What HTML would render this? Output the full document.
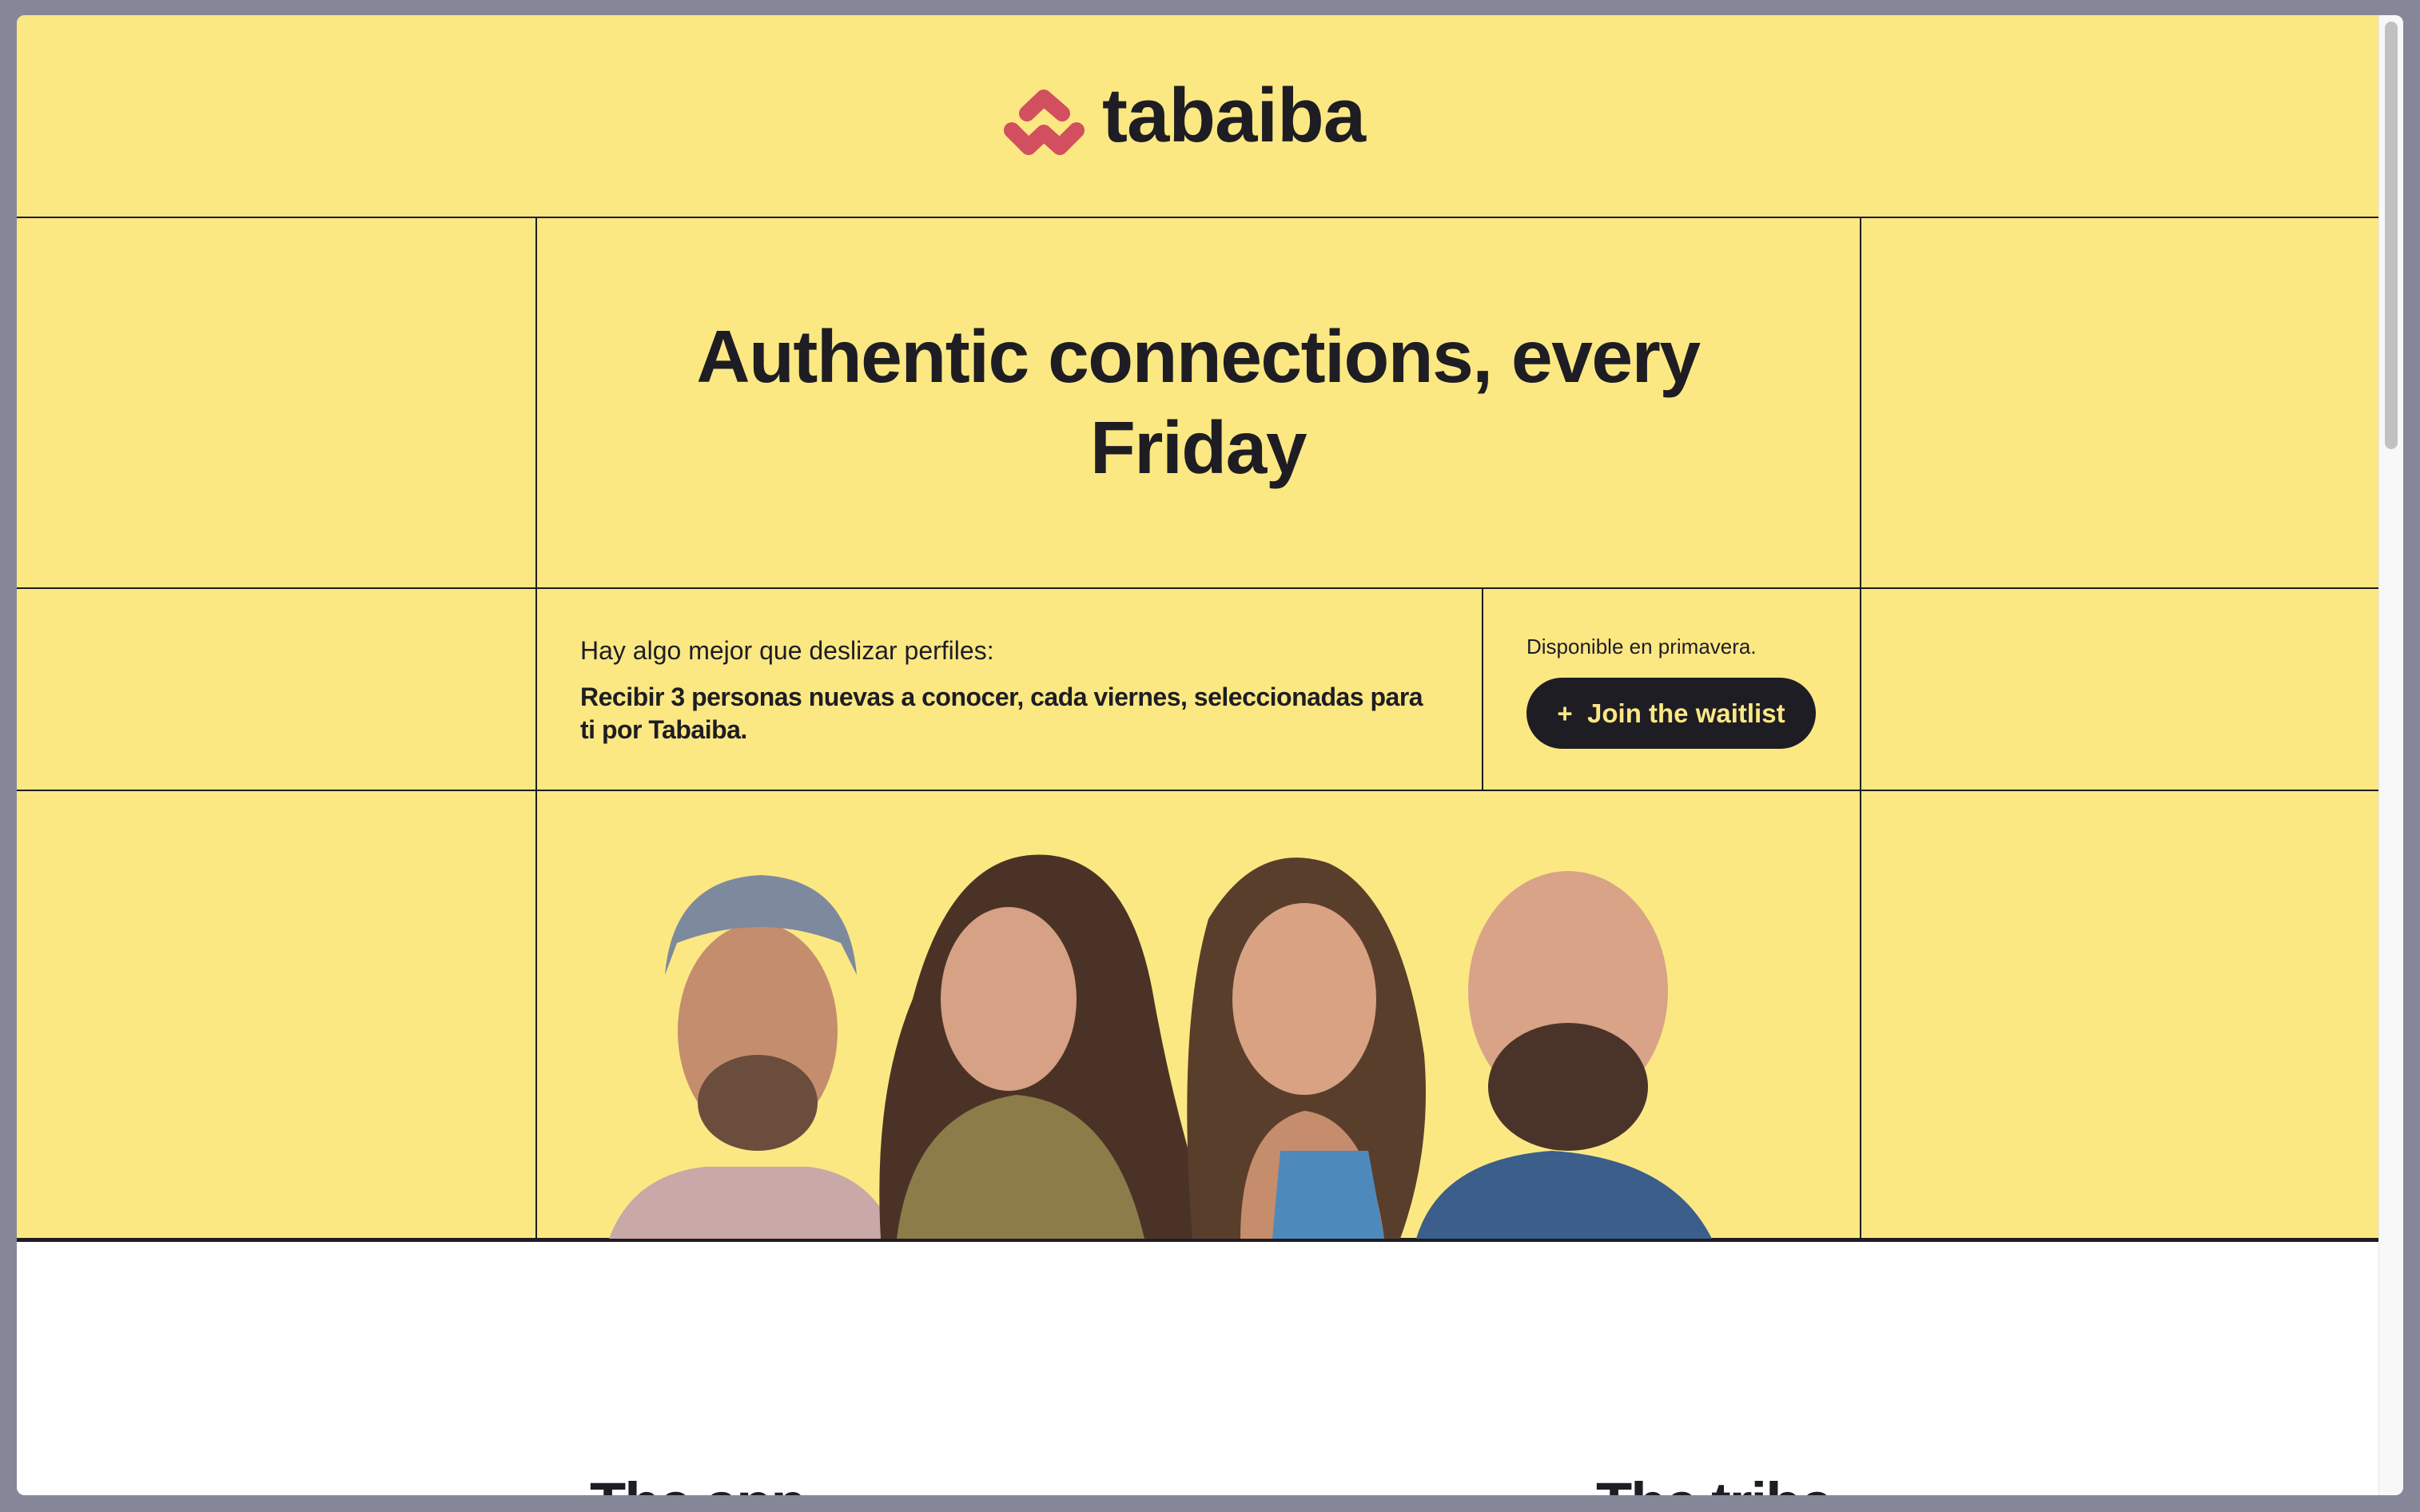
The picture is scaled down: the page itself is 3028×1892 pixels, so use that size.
<!DOCTYPE html>
<html><head><meta charset="utf-8"><style>
*{margin:0;padding:0;box-sizing:border-box}
body{width:3028px;height:1892px;background:#858799;overflow:hidden;font-family:"Liberation Sans",sans-serif;color:#1e1d24}
#win{position:absolute;left:21px;top:19px;width:2986px;height:1852px;background:#fff;border-radius:10px;overflow:hidden}
#page{position:absolute;left:0;top:0;width:2955px;height:1852px;overflow:hidden;background:#fff}
.y{background:#fbe883}
.ln{position:absolute;background:#1e1d24}
#sb{position:absolute;left:2955px;top:0;width:31px;height:1852px;background:#f8f8f8;border-left:1px solid #e6e6e6}
#th{position:absolute;left:7px;top:8px;width:16px;height:535px;background:#c1c1c1;border-radius:8px}
h1{position:absolute;left:650px;width:1656px;text-align:center;font-size:93px;line-height:114px;font-weight:bold;letter-spacing:-1.5px;top:370px}
.t{position:absolute;font-size:32px;line-height:40px}
.btn{position:absolute;left:1889px;top:829px;width:362px;height:89px;border-radius:45px;background:#1e1d24;color:#fbe883;font-size:33px;font-weight:bold;line-height:89px;text-align:center}
h2{position:absolute;font-size:74px;font-weight:bold;top:1820px;letter-spacing:-2px}
</style></head><body>
<div id="win"><div id="page">
<div class="y" style="position:absolute;left:0;top:0;width:2955px;height:1532px"></div>
<svg style="position:absolute;left:1227px;top:86px" width="120" height="100" viewBox="0 0 120 100">
<g fill="none" stroke="#d14f5e" stroke-width="20" stroke-linecap="round" stroke-linejoin="round">
<path d="M37 37 L58 17 L81 37"/><path d="M18 58 L39 79 L58 61 L78 79 L99 58"/></g></svg>
<div style="position:absolute;left:1358px;top:66px;font-size:96px;font-weight:bold;letter-spacing:-1px;line-height:120px">tabaiba</div>
<div class="ln" style="left:0;top:252px;width:2955px;height:2px"></div>
<div class="ln" style="left:0;top:716px;width:2955px;height:2px"></div>
<div class="ln" style="left:0;top:969px;width:2955px;height:2px"></div>
<div class="ln" style="left:0;top:1530px;width:2955px;height:5px"></div>
<div class="ln" style="left:649px;top:252px;width:2px;height:1280px"></div>
<div class="ln" style="left:2306px;top:252px;width:2px;height:1280px"></div>
<div class="ln" style="left:1833px;top:716px;width:2px;height:254px"></div>
<h1>Authentic connections, every<br>Friday</h1>
<div class="t" style="left:705px;top:775px">Hay algo mejor que deslizar perfiles:</div>
<div class="t" style="left:705px;top:833px;width:1080px;font-weight:bold;line-height:41px;letter-spacing:-0.5px">Recibir 3 personas nuevas a conocer, cada viernes, seleccionadas para ti por Tabaiba.</div>
<div class="t" style="left:1889px;top:770px;font-size:26px">Disponible en primavera.</div>
<div class="btn">+&nbsp; Join the waitlist</div>
<svg style="position:absolute;left:651px;top:971px" width="1655" height="560" viewBox="0 0 1655 560">
<path d="M90 560 Q120 480 210 470 L340 470 Q420 480 450 560Z" fill="#c9a8a8"/>
<ellipse cx="276" cy="300" rx="100" ry="135" fill="#c48d6e"/>
<path d="M160 230 Q170 110 280 105 Q390 110 400 230 L380 190 Q280 150 175 190Z" fill="#7d8a9e"/>
<ellipse cx="276" cy="390" rx="75" ry="60" fill="#6a4d3c"/>
<path d="M430 560 Q420 380 470 260 Q520 70 640 80 Q740 90 770 250 Q800 420 850 560Z" fill="#4a3326"/>
<ellipse cx="590" cy="260" rx="85" ry="115" fill="#d6a184"/>
<path d="M450 560 Q470 400 600 380 Q720 390 760 560Z" fill="#8b7c4a"/>
<path d="M820 560 Q800 300 840 160 Q900 60 990 90 Q1080 130 1110 330 Q1120 450 1080 560Z" fill="#5a3e2c"/>
<ellipse cx="960" cy="260" rx="90" ry="120" fill="#d9a283"/>
<path d="M880 560 Q880 420 960 400 Q1040 410 1060 560Z" fill="#c58d6c"/>
<path d="M920 560 L930 450 L1040 450 L1060 560Z" fill="#4d8abb"/>
<ellipse cx="1290" cy="250" rx="125" ry="150" fill="#d8a387"/>
<ellipse cx="1290" cy="370" rx="100" ry="80" fill="#4a342a"/>
<path d="M1100 560 Q1130 460 1270 450 Q1420 460 1470 560Z" fill="#3b5e8a"/>
</svg>
<h2 style="left:717px">The app</h2>
<h2 style="left:1976px">The tribe</h2>
</div>
<div id="sb"><div id="th"></div></div>
</div>
</body></html>
